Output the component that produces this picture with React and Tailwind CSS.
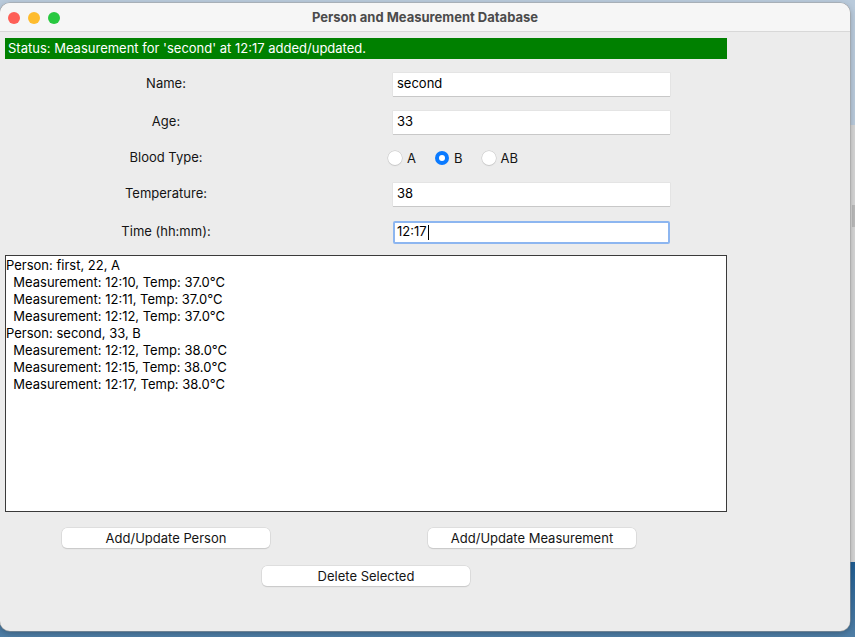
import { useState } from "react";

const font = { fontFamily: 'Inter, "Liberation Sans", Arial, sans-serif' };

function Field({ label, value, focused }) {
  return (
    <div className="flex items-center h-[24px]">
      <div className="w-[332px] text-center text-[13px] text-[#141414]">{label}</div>
      <div
        className={
          "ml-[61px] w-[277px] h-[23px] bg-white flex items-center text-[13px] text-black " +
          (focused
            ? "border-2 border-[#8db6f0] rounded-[2px] pl-[2px]"
            : "pl-[4px] shadow-[0_1px_0_#c8c8c8,0_0_0_0.5px_#dcdcdc]")
        }
      >
        {value}
        {focused && <span className="ml-[1px] w-[1px] h-[15px] bg-black" />}
      </div>
    </div>
  );
}

function Radio({ label, checked, onClick }) {
  return (
    <button onClick={onClick} className="flex items-center gap-[5px] text-[13px] leading-[20px] text-[#141414]">
      {checked ? (
        <span className="w-[14px] h-[14px] rounded-full bg-[#0a7aff] flex items-center justify-center">
          <span className="w-[6px] h-[6px] rounded-full bg-white" />
        </span>
      ) : (
        <span className="w-[14px] h-[14px] rounded-full bg-white shadow-[0_0_0_0.5px_#c4c4c4,0_1px_1px_#d0d0d0]" />
      )}
      <span>{label}</span>
    </button>
  );
}

function Btn({ children }) {
  return (
    <button className="block w-[208px] h-[20px] leading-[20px] bg-white rounded-[5px] text-[13px] text-[#141414] shadow-[0_0_0_0.5px_#cfcfcf,0_1px_1px_#c4c4c4]">
      {children}
    </button>
  );
}

const rows = [
  "Person: first, 22, A",
  "  Measurement: 12:10, Temp: 37.0°C",
  "  Measurement: 12:11, Temp: 37.0°C",
  "  Measurement: 12:12, Temp: 37.0°C",
  "Person: second, 33, B",
  "  Measurement: 12:12, Temp: 38.0°C",
  "  Measurement: 12:15, Temp: 38.0°C",
  "  Measurement: 12:17, Temp: 38.0°C",
];

export default function App() {
  const [blood, setBlood] = useState("B");

  return (
    <div className="relative w-[855px] h-[637px] overflow-hidden bg-[#b9cadb]" style={font}>
      {/* desktop behind */}
      <div className="absolute left-[840px] top-[125px] w-[20px] h-[437px] bg-[#d5d5d5]">
        <div className="ml-[12px] mt-[80px] w-[8px] h-[22px] bg-[#b9b9b9]" />
      </div>
      <div className="absolute left-0 top-[562px] w-[855px] h-[75px] bg-gradient-to-b from-[#1f5d92] to-[#4f7ea5]" />

      {/* window */}
      <div className="absolute left-0 top-[3px] w-[850px] h-[628px] rounded-[10px] overflow-hidden bg-[#ececec] shadow-[0_0_0_0.5px_#a0a0a0,0_2px_6px_rgba(0,0,0,0.25)] flex flex-col">
        <div className="h-[29px] shrink-0 bg-[#f6f6f6] border-b border-[#d8d8d8] flex items-center">
          <div className="flex gap-[8px] pl-[8px] pt-[1px]">
            <span className="w-[12px] h-[12px] rounded-full bg-[#fe5f57]" />
            <span className="w-[12px] h-[12px] rounded-full bg-[#febc2e]" />
            <span className="w-[12px] h-[12px] rounded-full bg-[#28c840]" />
          </div>
          <div className="flex-1 text-center text-[13px] font-bold text-[#4b4b4b] pr-[60px] pt-[1px]">
            Person and Measurement Database
          </div>
        </div>

        <div className="pl-[5px] pt-[6px]">
          <div className="w-[722px] h-[21px] bg-[#008000] text-white text-[13px] flex items-center pl-[3px]">
            Status: Measurement for 'second' at 12:17 added/updated.
          </div>

          <div className="flex flex-col gap-[14px] mt-[13px] -ml-[5px]">
            <Field label="Name:" value="second" />
            <Field label="Age:" value="33" />
            <div className="flex items-center h-[20px]">
              <div className="w-[332px] text-center text-[13px] text-[#141414]">Blood Type:</div>
              <div className="ml-[56px] flex gap-[19px]">
                {["A", "B", "AB"].map((b) => (
                  <Radio key={b} label={b} checked={blood === b} onClick={() => setBlood(b)} />
                ))}
              </div>
            </div>
            <Field label="Temperature:" value="38" />
            <Field label="Time (hh:mm):" value="12:17" focused />
          </div>

          <div className="mt-[11px] w-[722px] h-[257px] bg-white border border-[#3a3a3a] pt-[1px] text-[13px] text-black leading-[17px]">
            {rows.map((r, i) => (
              <div key={i} className="whitespace-pre">{r}</div>
            ))}
          </div>

          <div className="flex mt-[16px]">
            <div className="ml-[57px]">
              <Btn>Add/Update Person</Btn>
            </div>
            <div className="ml-[158px]">
              <Btn>Add/Update Measurement</Btn>
            </div>
          </div>
          <div className="mt-[18px] ml-[257px]">
            <Btn>Delete Selected</Btn>
          </div>
        </div>
      </div>
    </div>
  );
}
